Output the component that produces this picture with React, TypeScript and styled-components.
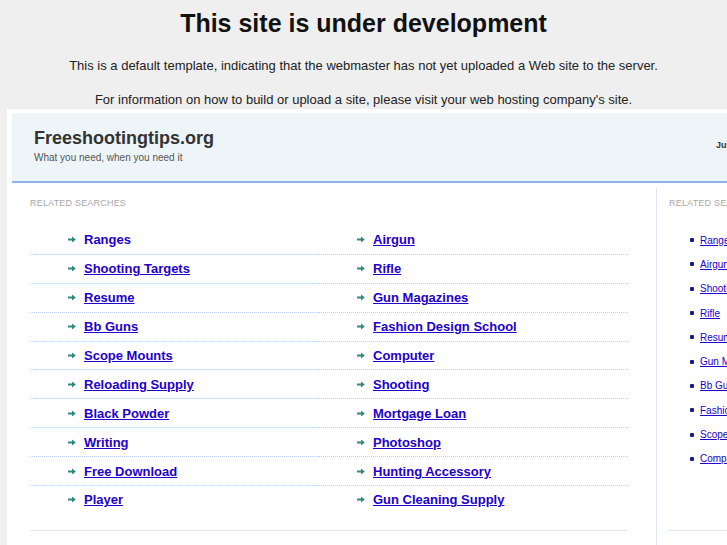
import React from 'react'
import styled, { createGlobalStyle } from 'styled-components'

const GlobalStyle = createGlobalStyle`
  html, body {
    margin: 0;
    padding: 0;
    background: #efefef;
    overflow: hidden;
  }
  body {
    font-family: "Liberation Sans", Arial, sans-serif;
  }
`

const Page = styled.div`
  width: 727px;
  height: 545px;
  overflow: hidden;
`

const Title = styled.h1`
  margin: 9px 0 0;
  font-size: 25px;
  line-height: 29px;
  font-weight: bold;
  text-align: center;
  color: #111;
`

const Notice = styled.p<{ $top: number }>`
  margin: ${(p) => p.$top}px 0 0;
  font-size: 13px;
  line-height: 16px;
  text-align: center;
  color: #222;
`

const Frame = styled.div`
  margin: 1px 0 0 7px;
  padding: 4px 0 0 5px;
  width: 940px;
  height: 500px;
  background: #fff;
`

const Header = styled.div`
  display: grid;
  grid-template-columns: 644px 1fr;
  height: 68px;
  background: #eef5f8;
  border-bottom: 2px solid #8fb2e8;
`

const Brand = styled.div`
  padding: 13px 0 0 22px;
`

const SiteName = styled.div`
  font-size: 18px;
  line-height: 24px;
  font-weight: bold;
  color: #333;
`

const Tagline = styled.div`
  margin-top: 2px;
  font-size: 10px;
  line-height: 12px;
  color: #555;
`

const Dateline = styled.div`
  padding: 27px 0 0 60px;
  font-size: 9px;
  font-weight: bold;
  color: #333;
  white-space: nowrap;
`

const Body = styled.div`
  display: grid;
  grid-template-columns: 644px 260px;
  margin-top: 5px;
`

const MainCol = styled.div`
  padding: 10px 28px 0 18px;
`

const SideCol = styled.div`
  padding: 10px 0 0 12px;
  border-left: 1px solid #dbe6f6;
  height: 360px;
`

const Label = styled.div`
  font-size: 9px;
  line-height: 10px;
  letter-spacing: 0.2px;
  color: #a8a8a8;
  text-transform: uppercase;
`

const LinkGrid = styled.div`
  display: grid;
  grid-template-columns: 289px 309px;
  margin-top: 18px;
  padding-bottom: 15px;
  border-bottom: 1px solid #dde8f7;
`

const Cell = styled.div<{ $last: boolean }>`
  display: flex;
  align-items: center;
  gap: 8px;
  height: 27.9px;
  padding-left: 38px;
  border-bottom: ${(p) => (p.$last ? '1px solid transparent' : '1px dotted #b9d1ee')};
`

const MainLink = styled.a<{ $plain?: boolean }>`
  font-size: 13px;
  font-weight: bold;
  color: #2200cc;
  text-decoration: ${(p) => (p.$plain ? 'none' : 'underline')};
`

const SideList = styled.ul`
  list-style: none;
  margin: 20px 0 0;
  padding: 0 0 59px 21px;
  border-bottom: 1px solid #dde8f7;
`

const SideItem = styled.li`
  display: flex;
  align-items: center;
  gap: 6px;
  height: 24.3px;
`

const Bullet = styled.span`
  width: 4px;
  height: 4px;
  border-radius: 1px;
  background: #1a1a8c;
  flex-shrink: 0;
`

const SideLink = styled.a`
  font-size: 10px;
  color: #2200cc;
  text-decoration: underline;
  white-space: nowrap;
`

const Arrow = () => (
  <svg width="8" height="7" viewBox="0 0 8 7">
    <path d="M0 2.6h4V0.5L7.8 3.5 4 6.5V4.4H0z" fill="#2f8a7c" />
  </svg>
)

const left = [
  'Ranges', 'Shooting Targets', 'Resume', 'Bb Guns', 'Scope Mounts',
  'Reloading Supply', 'Black Powder', 'Writing', 'Free Download', 'Player',
]
const right = [
  'Airgun', 'Rifle', 'Gun Magazines', 'Fashion Design School', 'Computer',
  'Shooting', 'Mortgage Loan', 'Photoshop', 'Hunting Accessory', 'Gun Cleaning Supply',
]
const side = [
  'Ranges', 'Airgun', 'Shooting Targets', 'Rifle', 'Resume',
  'Gun Magazines', 'Bb Guns', 'Fashion Design School', 'Scope Mounts', 'Computer',
]

export default function App() {
  return (
    <Page>
      <GlobalStyle />
      <Title>This site is under development</Title>
      <Notice $top={20}>
        This is a default template, indicating that the webmaster has not yet uploaded a Web site to the server.
      </Notice>
      <Notice $top={18}>
        For information on how to build or upload a site, please visit your web hosting company's site.
      </Notice>
      <Frame>
        <Header>
          <Brand>
            <SiteName>Freeshootingtips.org</SiteName>
            <Tagline>What you need, when you need it</Tagline>
          </Brand>
          <Dateline>June 2013</Dateline>
        </Header>
        <Body>
          <MainCol>
            <Label>Related Searches</Label>
            <LinkGrid>
              {left.map((l, i) => (
                <React.Fragment key={l}>
                  <Cell $last={i === left.length - 1}>
                    <Arrow />
                    <MainLink href="#" $plain={i === 0}>{l}</MainLink>
                  </Cell>
                  <Cell $last={i === left.length - 1}>
                    <Arrow />
                    <MainLink href="#">{right[i]}</MainLink>
                  </Cell>
                </React.Fragment>
              ))}
            </LinkGrid>
          </MainCol>
          <SideCol>
            <Label>Related Searches</Label>
            <SideList>
              {side.map((s) => (
                <SideItem key={s}>
                  <Bullet />
                  <SideLink href="#">{s}</SideLink>
                </SideItem>
              ))}
            </SideList>
          </SideCol>
        </Body>
      </Frame>
    </Page>
  )
}
